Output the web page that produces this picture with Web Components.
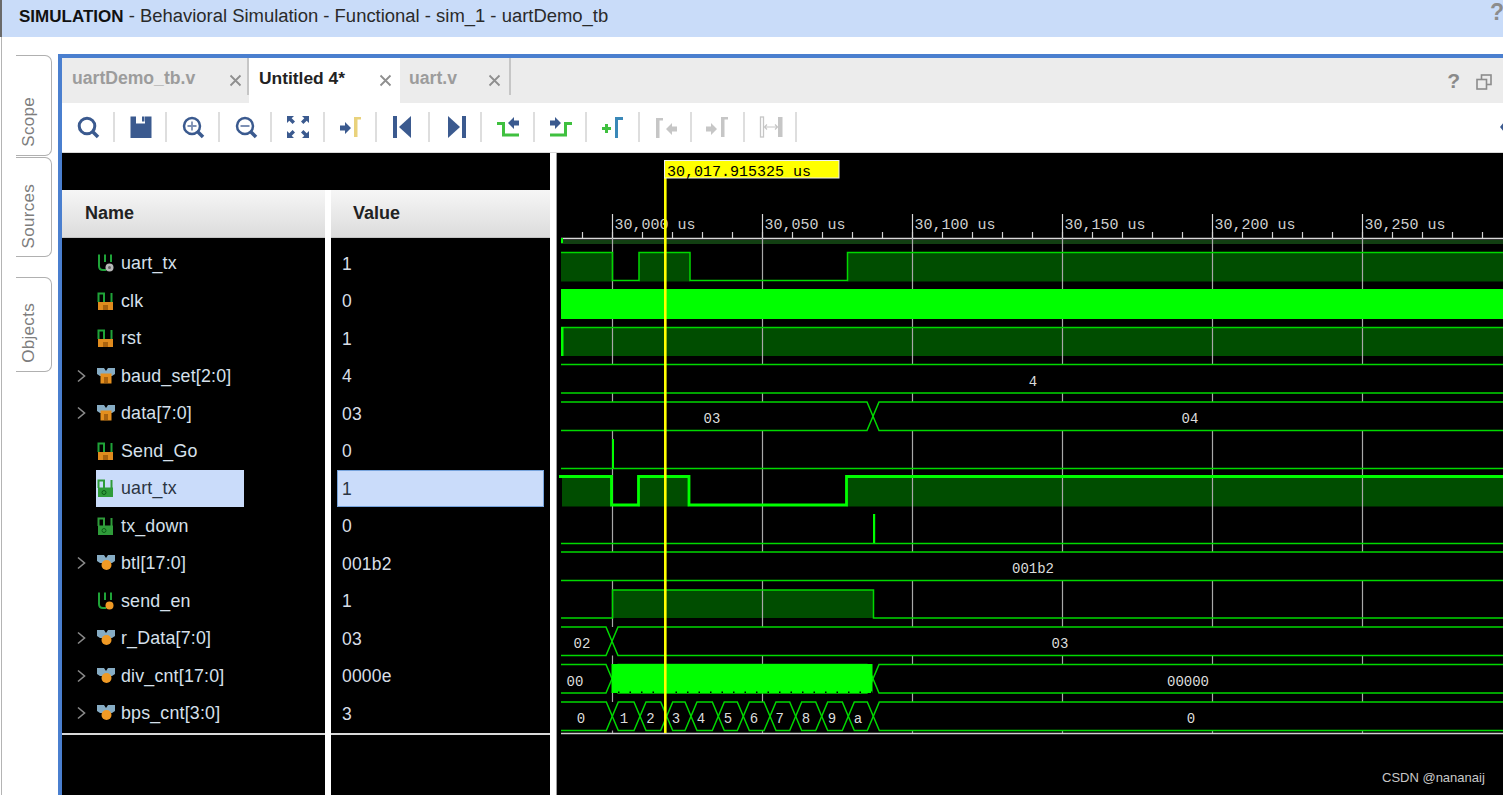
<!DOCTYPE html>
<html><head><meta charset="utf-8"><title>Waveform</title>
<style>html,body{margin:0;padding:0;background:#fff;overflow:hidden}</style></head>
<body>
<ui-app>
  <title-bar><b>SIMULATION</b> - Behavioral Simulation - Functional - sim_1 - uartDemo_tb</title-bar>
  <div slot="main" style="display:flex;flex:1;min-height:0">
    <side-tabs>
      <side-tab h="101">Scope</side-tab>
      <side-tab h="100" mt="1">Sources</side-tab>
      <side-tab h="95" mt="20">Objects</side-tab>
    </side-tabs>
    <wave-panel>
      <tab-bar slot="tabs">
        <doc-tab w="187" pad="10" xpos="173">uartDemo_tb.v</doc-tab>
        <doc-tab w="151" pad="10" xpos="136" active>Untitled 4*</doc-tab>
        <doc-tab w="111" pad="9" xpos="94">uart.v</doc-tab>
      </tab-bar>
      <wave-toolbar slot="tools"></wave-toolbar>
      <signal-list slot="list">
        <signal-row icon="tb" value="1">uart_tx</signal-row>
        <signal-row icon="reg" value="0">clk</signal-row>
        <signal-row icon="reg" value="1">rst</signal-row>
        <signal-row icon="bus" value="4" expand>baud_set[2:0]</signal-row>
        <signal-row icon="bus" value="03" expand>data[7:0]</signal-row>
        <signal-row icon="reg" value="0">Send_Go</signal-row>
        <signal-row icon="wire" value="1" selected>uart_tx</signal-row>
        <signal-row icon="wire" value="0">tx_down</signal-row>
        <signal-row icon="busc" value="001b2" expand>btl[17:0]</signal-row>
        <signal-row icon="en" value="1">send_en</signal-row>
        <signal-row icon="busc" value="03" expand>r_Data[7:0]</signal-row>
        <signal-row icon="busc" value="0000e" expand>div_cnt[17:0]</signal-row>
        <signal-row icon="busc" value="3" expand>bps_cnt[3:0]</signal-row>
      </signal-list>
      <wave-canvas slot="wave"></wave-canvas>
    </wave-panel>
  </div>
</ui-app>
<script>
const SANS='"Liberation Sans",Arial,sans-serif';
function def(name,css,html,extra){
  class C extends HTMLElement{
    constructor(){super();const r=this.attachShadow({mode:'open'});r.innerHTML=`<style>${css}</style>${typeof html==='function'?html(this):html}`;}
    connectedCallback(){if(extra)extra(this,this.shadowRoot);}
  }
  customElements.define(name,C);
}
def('ui-app',`:host{display:flex;flex-direction:column;width:1503px;height:795px;font-family:${SANS};overflow:hidden;background:#fff;position:relative}
 .edge{position:absolute;left:1px;top:37px;bottom:0;width:1px;background:#b4b4b4}
 .main{display:flex;flex:1;min-height:0}`,
 `<slot></slot><div class="main"><slot name="main"></slot></div><div class="edge"></div>`);

def('title-bar',`:host{display:flex;align-items:center;height:37px;flex:none;box-sizing:border-box;background:#c9dcf9;border-left:2px solid #6a6a6a;padding:0 0 6px 17px;font:18.450px ${SANS};color:#2a2a2a;position:relative;white-space:pre}
 ::slotted(b){font-weight:700;font-size:17px;color:#111}
 .q{position:absolute;right:-1px;top:-1px;font:700 23px ${SANS};color:#8c8c8c}`,
 `<span><slot></slot></span><span class="q">?</span>`);

def('side-tabs',`:host{display:flex;flex-direction:column;flex:none;width:58px;box-sizing:border-box;padding:18px 0 0 16px}`,`<slot></slot>`);
def('side-tab',`:host{display:flex;align-items:flex-end;justify-content:center;box-sizing:border-box;width:36px;border:1px solid #b0b0b0;border-left:none;border-radius:0 7px 7px 0;color:#7d7d7d;font:17px ${SANS};letter-spacing:.3px;padding:0 10px 8px 0}
 span{writing-mode:vertical-rl;transform:rotate(180deg)}`,`<span><slot></slot></span>`,
 (el)=>{el.style.height=el.getAttribute('h')+'px';el.style.marginTop=(el.getAttribute('mt')||0)+'px';});

def('wave-panel',`:host{display:grid;flex:1;min-width:0;margin-top:17px;box-sizing:border-box;border-top:4px solid #4a7fcf;border-left:4px solid #4a7fcf;grid-template-columns:488px 6px 1fr;grid-template-rows:45px 50px 1fr;background:#fff}
 .t{grid-column:1/4;grid-row:1;display:flex}.b{grid-column:1/4;grid-row:2;display:flex}
 .l{grid-column:1;grid-row:3;display:flex;min-height:0}.w{grid-column:3;grid-row:3;display:flex;min-height:0;overflow:hidden}`,
 `<div class="t"><slot name="tabs"></slot></div><div class="b"><slot name="tools"></slot></div><div class="l"><slot name="list"></slot></div><div class="w"><slot name="wave"></slot></div>`);

def('tab-bar',`:host{display:flex;flex:1;background:#ececec;position:relative}
 .q{position:absolute;right:43px;top:11px;font:700 21px ${SANS};color:#8a8a8a}
 svg{position:absolute;right:11px;top:16px}`,
 `<slot></slot><span class="q">?</span><svg width="16" height="16" viewBox="0 0 16 16" fill="none" stroke="#8c8c8c" stroke-width="1.6"><rect x="5.5" y="1" width="9.5" height="9.5"/><rect x="1" y="5.5" width="9.5" height="9.5" fill="#ececec"/></svg>`);

def('doc-tab',`:host{display:block;position:relative;box-sizing:border-box;height:45px;font:700 17.6px/41px ${SANS};color:#9c9c9c;white-space:nowrap}
 :host([active]){background:#fff;color:#222;font-size:17.4px}
 .sep{position:absolute;right:0;top:0;height:37px;width:2px;background:#c6c6c6}
 :host([active]) .sep{display:none}
 svg{position:absolute;top:16px}`,
 `<slot></slot><span class="sep"></span><svg width="13" height="13" viewBox="0 0 13 13" stroke="#8f8f8f" stroke-width="1.8"><path d="M1.5 1.5 11.5 11.5M11.5 1.5 1.5 11.5"/></svg>`,
 (el,r)=>{el.style.width=el.getAttribute('w')+'px';el.style.paddingLeft=el.getAttribute('pad')+'px';r.querySelector('svg').style.left=el.getAttribute('xpos')-6+'px';});

const B='#3b5a8f',Y='#e9d27c',G='#3fc03f',L='#3a88b8',D='#c6c6c6';
const arrowR=(x,y,c)=>`<path d="M${x} ${y-2.5}h5v-3.5l6 6-6 6v-3.5h-5z" fill="${c}"/>`;
const arrowL=(x,y,c)=>`<path d="M${x} ${y-2.5}h-5v-3.5l-6 6 6 6v-3.5h5z" fill="${c}"/>`;
const gamma=(x,c)=>`<path d="M${x} 22V2h7v2.500h-3.500V22z" fill="${c}"/>`;
const ICONS=[
 `<circle cx="11" cy="11" r="7.800" fill="none" stroke="${B}" stroke-width="3"/><path d="M16.500 16.500 22 22" stroke="${B}" stroke-width="3.500"/>`,
 `<path d="M1.500 1.500H7V8.500H16V1.500H22.500V23H1.500z" fill="${B}"/><rect x="13" y="1.500" width="2.500" height="5" fill="${B}"/>`,
 `<circle cx="11" cy="11" r="8" fill="none" stroke="${B}" stroke-width="2.500"/><path d="M16.500 16.500 22 22" stroke="${B}" stroke-width="3.500"/><path d="M11 6.500v9M6.500 11h9" stroke="#7d90b4" stroke-width="1.800"/>`,
 `<circle cx="11" cy="11" r="8" fill="none" stroke="${B}" stroke-width="2.500"/><path d="M16.500 16.500 22 22" stroke="${B}" stroke-width="3.500"/><path d="M6.500 11h9" stroke="#7d90b4" stroke-width="2"/>`,
 `<g fill="${B}"><path d="M1 1h7l-2.300 2.300 3.300 3.300-2.400 2.400-3.300-3.300L1 8z"/><path d="M23 1h-7l2.300 2.300-3.300 3.300 2.400 2.400 3.300-3.300L23 8z"/><path d="M1 23h7l-2.300-2.300 3.300-3.300-2.400-2.400-3.300 3.300L1 16z"/><path d="M23 23h-7l2.300-2.300-3.300-3.300 2.400-2.400 3.300 3.300L23 16z"/></g>`,
 arrowR(1,13,B)+gamma(15,Y),
 `<rect x="2" y="1" width="4" height="22" fill="${B}"/><path d="M20 1v22L8 12z" fill="${B}"/>`,
 `<rect x="18" y="1" width="4" height="22" fill="${B}"/><path d="M4 1v22l12-11z" fill="${B}"/>`,
 arrowL(23,8,B)+`<path d="M1 8.500H7.500V20H23" fill="none" stroke="${G}" stroke-width="3"/>`,
 arrowR(1,8,B)+`<path d="M1 20H16.500V8.500H23" fill="none" stroke="${G}" stroke-width="3"/>`,
 `<path d="M1 13.500h9M5.500 9v9" stroke="${G}" stroke-width="3"/>`+`<path d="M15.500 23V3.500H22" fill="none" stroke="${L}" stroke-width="3"/>`,
 `<path d="M2 23V3h7v2.500H5.500V23z" fill="${D}"/>`+arrowL(23,14,D),
 arrowR(0,14,D)+gamma(15,D),
 `<rect x="1.500" y="2" width="3" height="20" fill="#fff" stroke="${D}" stroke-width="1.300"/><rect x="19" y="2" width="4.500" height="20" fill="${D}"/><path d="M5.500 12H18.500M8 9.500 5.500 12 8 14.500M16 9.500l2.500 2.500-2.500 2.500" fill="none" stroke="${D}" stroke-width="1.200"/>`
];
def('wave-toolbar',`:host{display:flex;flex:1;align-items:center;height:50px;box-sizing:border-box;background:#fff;border-bottom:1px solid #d8d8d8;padding-bottom:1px;overflow:hidden}
 .btn{flex:none;width:52.5px;height:30px;box-sizing:border-box;border-right:2px solid #dedede;padding-left:2px;display:flex;align-items:center;justify-content:center}
 .end{margin-left:auto;width:5px;overflow:hidden;height:20px;flex:none}
 svg{display:block}`,
 `${ICONS.map(i=>`<div class="btn"><svg width="24" height="24" viewBox="0 0 24 24">${i}</svg></div>`).join('')}<div class="end"><svg width="24" height="20" viewBox="0 0 24 20"><path d="M2 10 6 5v3h4v4H6v3z" fill="${B}"/></svg></div>`);

def('signal-list',`:host{display:block;flex:1;position:relative;background:#fff;overflow:hidden}
 .top{height:37px;background:#000}
 .cols{display:grid;grid-template-columns:263px 219px;column-gap:6px}
 .h{box-sizing:border-box;height:47.5px;background:linear-gradient(#f6f6f6,#dcdcdc);border:1px solid #c4c4c4;border-width:0 0 1px 0;font:700 18px/47px ${SANS};color:#222;padding-left:23px}
 .h+.h{padding-left:22px}
 .pad{height:7px;background:#000}
 .foot{height:70px;background:#000;border-top:2px solid #d8d8d8}
 .gapfill{height:1px;background:#000}`,
 `<div class="top"></div><div class="cols"><div class="h">Name</div><div class="h">Value</div><div class="pad"></div><div class="pad"></div></div><slot></slot><div class="cols"><div class="gapfill"></div><div class="gapfill"></div><div class="foot"></div><div class="foot"></div></div>`);

const svgIcon={
 reg:`<path d="M1.500 10V1.500H7V10M14.500 10V1" fill="none" stroke="#1fa338" stroke-width="2"/><rect x="1" y="10" width="15" height="8" fill="#e08b1e"/><rect x="6" y="13" width="5" height="5" fill="#a9620e"/>`,
 tb:`<path d="M2 0.500V12Q2 16 6 16H9M8 0.500V8M14 0.500V8" fill="none" stroke="#1fa338" stroke-width="2"/><circle cx="12.500" cy="13.500" r="4" fill="#b8b8b8"/><circle cx="12.500" cy="13.500" r="1.500" fill="#666"/>`,
 en:`<path d="M2 0.500V12Q2 16 6 16H9M8 0.500V8M14 0.500V8" fill="none" stroke="#1fa338" stroke-width="2"/><circle cx="12.500" cy="13.500" r="4" fill="#f09a25"/>`,
 wire:`<path d="M1.500 9V1.500H7V9M14.500 9V1" fill="none" stroke="#2f9c3a" stroke-width="2"/><rect x="1" y="8.500" width="15" height="9.500" fill="#2f9c3a"/><circle cx="7" cy="13.500" r="2" fill="none" stroke="#0d5c17" stroke-width="1"/>`,
 bus:`<path d="M0 1H7L9 4 11 1H18V7L15 9H3L0 7z" fill="#86acc4"/><rect x="3.500" y="6.500" width="11" height="10" fill="#e58f1e"/><rect x="7" y="10" width="4" height="6" fill="#a9620e"/>`,
 busc:`<path d="M0 1H7L9 4 11 1H18V7L15 9H3L0 7z" fill="#86acc4"/><circle cx="9.500" cy="11" r="5" fill="#f09a25"/>`
};
def('signal-row',`:host{display:grid;grid-template-columns:263px 219px;column-gap:6px;height:37.5px;font:17.800px ${SANS};letter-spacing:.2px;color:#d6e0ec}
 .n,.v{background:#000;display:flex;align-items:center;height:37.5px}
 .c{width:15px;margin-left:14px;flex:none;display:flex;visibility:hidden}
 :host([expand]) .c{visibility:visible}
 .box{display:flex;align-items:center;box-sizing:border-box;width:148px;height:37px;margin-left:5px;padding-left:1px;flex:none}
 .box svg{flex:none;margin-right:6px}
 .box span{padding-top:1px}
 .vb{box-sizing:border-box;width:207px;height:37px;margin-left:6px;padding-left:4px;line-height:36px;border:1px solid transparent;color:#d8dee6;font-size:17.500px}
 :host([selected]) .box{background:#cadcfa;color:#2a3442}
 :host([selected]) .vb{background:#cadcfa;border-color:#76a3dc;color:#2a3442}`,
 (el)=>`<div class="n"><div class="c"><svg width="12" height="14" viewBox="0 0 12 14"><path d="M2 1.500 8.500 7 2 12.500" fill="none" stroke="#8a8a8a" stroke-width="1.600"/></svg></div><div class="box"><svg width="18" height="18" viewBox="0 0 18 18">${svgIcon[el.getAttribute('icon')]||''}</svg><span><slot></slot></span></div></div><div class="v"><div class="vb">${el.getAttribute('value')}</div></div>`);

def('wave-canvas',`:host{display:block;flex:1;background:#000;border-left:1px solid #9a9a9a;box-sizing:border-box;overflow:hidden}
 svg{display:block}
 text{font-family:"Liberation Mono",monospace;fill:#dcdcdc}
 .ruler{font-size:15px;fill:#cfcfcf}
 .val{font-size:14px;text-anchor:middle}
 .cur{font-size:15px;fill:#000}
 .wm{font:13px ${SANS};fill:#c8c8c8}`,
 ()=>{
  const W=1503,LC='#00d800',DK='#004d00',BR='#00ff00';
  let s='',grid=[612.5,762.5,912.5,1062.5,1212.5,1362.5];
  const line=(d,c=LC,w=1.5)=>`<path d="${d}" fill="none" stroke="${c}" stroke-width="${w}"/>`;
  const rect=(x,y,w,h,c)=>`<rect x="${x}" y="${y}" width="${w}" height="${h}" fill="${c}"/>`;
  s+=rect(561,240,W-561,4,'#123f12');
  s+=line(`M561 238.500H${W}`,'#d8d8d8',1.5);
  s+=rect(561,238,2,5,BR);
  for(let x=582.5;x<W;x+=30){s+=line(`M${x} 232V238`,'#d0d0d0',1.2);}
  grid.forEach((x,i)=>{s+=line(`M${x} 214V238`,'#d8d8d8',1.2);
    s+=`<text class="ruler" x="${x+2}" y="229">30,${String(i*50).padStart(3,'0')} us</text>`;});
  const fill=(xs,t,b)=>{let o='';xs.forEach(([a,e])=>o+=rect(a,t,e-a,b-t,DK));return o;};
  s+=fill([[561,612.5],[639,690],[847.500,W]],252,281.500);
  s+=fill([[563,W]],327,356);
  s+=fill([[562,611.500],[638,689],[846.500,W]],476,506.500);
  s+=fill([[612.500,873.500]],590,618);
  grid.forEach(x=>{s+=line(`M${x} 238V733`,'#a8a8a8',1.2);});
  s+=line(`M561 252.500H612.500V280.500H639V252.500H690V280.500H847.500V252.500H${W}`);
  s+=rect(561,289,W-561,30,BR);
  s+=line(`M561 327.500H${W}`);s+=rect(561,327,2.500,29,BR);
  const bus=(t,b,xs,labels,lx)=>{
    const m=(t+b)/2,h=6;let o=rect(561,t,W-561,b-t,'#000');
    const pts=[561,...xs,W];
    for(let i=0;i<pts.length-1;i++){
      const a=pts[i],e=pts[i+1];
      const l=i===0?a:a+h, r=i===pts.length-2?e:e-h;
      let top=`M${i===0?'':a+' '+m+'L'}${i===0?a+' '+t:l+' '+t}L${r} ${t}${i===pts.length-2?'':'L'+e+' '+m}`;
      let bot=`M${i===0?a+' '+b:a+' '+m+'L'+l+' '+b}L${r} ${b}${i===pts.length-2?'':'L'+e+' '+m}`;
      o+=line(top)+line(bot);
    }
    labels.forEach((t2,i)=>{o+=`<text class="val" x="${lx[i]}" y="${t+21}">${t2}</text>`;});
    return o;
  };
  s+=bus(364.500,393,[],['4'],[1033]);
  s+=bus(402,430.500,[873],['03','04'],[712,1190]);
  s+=line(`M561 468.500H${W}`);s+=rect(612,439,2,29,BR);
  s+=line(`M559 476.500H611.500V505H638.500V476.500H689V505H846.500V476.500H${W}`,BR,2.8);
  s+=line(`M561 543.500H${W}`);s+=rect(873,514,2.200,29,BR);
  s+=bus(552,580.500,[],['001b2'],[1033]);
  s+=line(`M561 618H612.500V590H873.500V618H${W}`);
  s+=bus(627,655.500,[612],['02','03'],[582,1060]);
  s+=bus(664.500,693,[612,873],['00','','00000'],[575,0,1188]);
  s+=rect(611.500,664,261,29,BR);
  for(let x=618;x<872;x+=11.5){s+=rect(x,691.5,1.5,1.5,'#000');}
  s+=bus(702,730.500,[612.3,640,666.7,691,718.3,743.3,770,795.7,821.7,848.3,873.3],['0','1','2','3','4','5','6','7','8','9','a','0'],[581,624,650.500,676,701,728,754,779.700,806,832,858,1191]);
  s+=line(`M561 733.500H${W}`,'#d0d0d0',1.5);
  s+=rect(664,178,2.600,555,'#ffff00');
  s+=`<rect x="664.500" y="160.500" width="174.500" height="17.500" fill="#ffff00" stroke="#f0f0f0"/>`;
  s+=`<text class="cur" x="667" y="176">30,017.915325 us</text>`;
  s+=`<text class="wm" x="1382" y="782">CSDN @nananaij</text>`;
  return `<svg width="946" height="642" viewBox="557 153 946 642">${s}</svg>`;
 });
</script>
</body></html>
